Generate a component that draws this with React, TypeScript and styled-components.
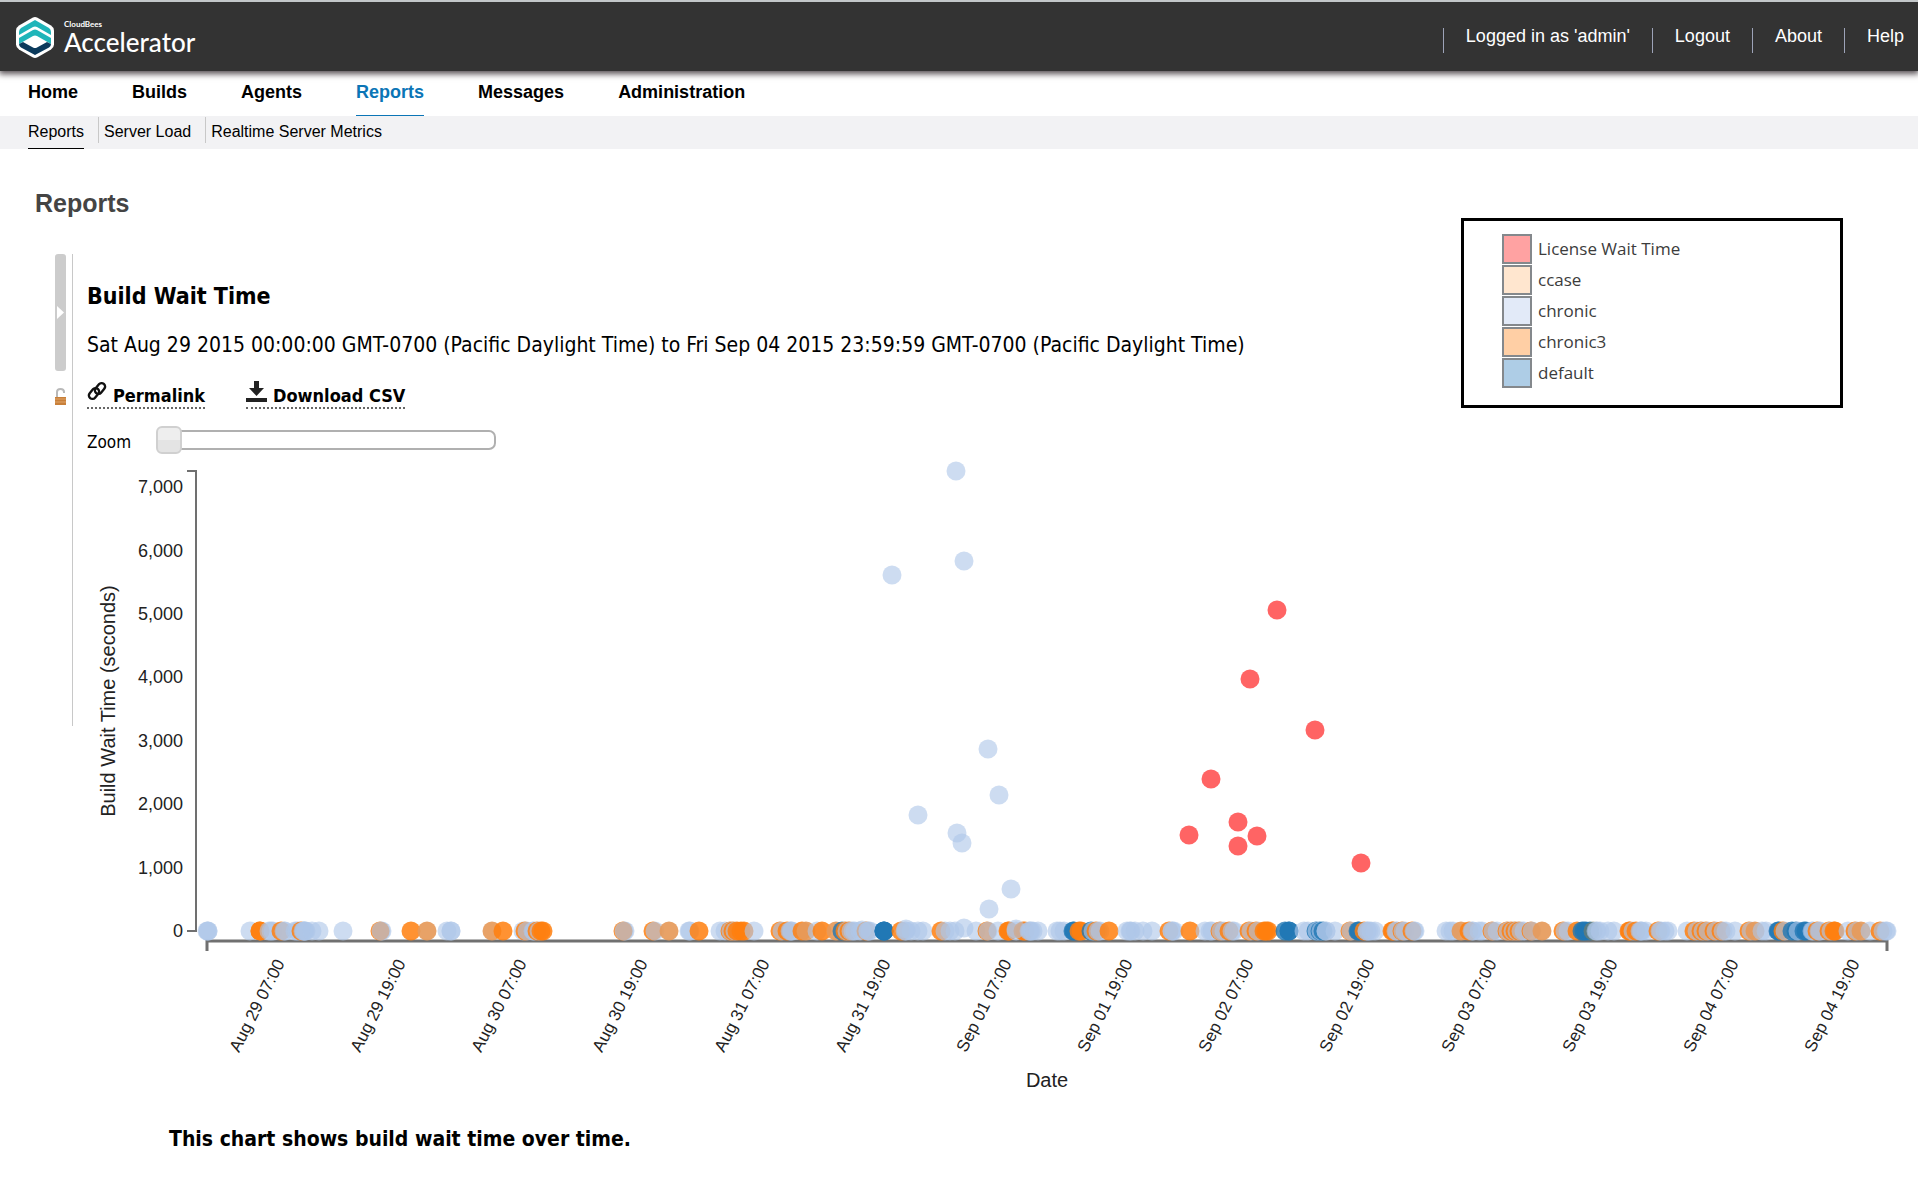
import React from 'react';
import styled, { createGlobalStyle } from 'styled-components';

const Global = createGlobalStyle`
  * { box-sizing: border-box; }
  body { margin: 0; background: #fff; color: #000; font-family: "Liberation Sans", Arial, sans-serif; }
`;

const ui = '"Liberation Sans", Arial, sans-serif';
const report = '"DejaVu Sans Condensed", "DejaVu Sans", sans-serif';

const Masthead = styled.header`
  display: flex;
  justify-content: space-between;
  align-items: flex-start;
  height: 71px;
  padding: 0 14px 0 16px;
  border-top: 2px solid #c3c7c9;
  background: #333;
  box-shadow: 0 2px 6px 1px rgba(30, 20, 25, 0.75);
`;

const Brand = styled.a`
  display: flex;
  gap: 10px;
  padding-top: 15px;
  color: #fff;
  text-decoration: none;
  font-family: Lato, "Open Sans", sans-serif;
`;

const BrandText = styled.span`
  display: flex;
  flex-direction: column;
  padding-top: 2px;
`;

const Company = styled.span`
  font-size: 8px;
  line-height: 10px;
  font-weight: bold;
`;

const Product = styled.span`
  font-size: 26px;
  line-height: 26px;
  font-weight: 500;
`;

const Account = styled.nav`
  display: flex;
  padding-top: 26px;
`;

const AccountItem = styled.span`
  height: 25px;
  margin-left: 22px;
  padding-left: 22px;
  border-left: 1px solid #9da3b8;
  font-size: 18px;
  line-height: 16px;
  color: #fff;
  a { color: inherit; text-decoration: none; }
`;

const MainNav = styled.nav`
  display: flex;
  gap: 54px;
  height: 45px;
  padding-left: 28px;
`;

const MainLink = styled.a<{ $on?: boolean }>`
  padding-top: 11px;
  font-size: 18px;
  line-height: 20px;
  font-weight: bold;
  text-decoration: none;
  color: ${(p) => (p.$on ? '#0b75b6' : '#000')};
  border-bottom: 1px solid ${(p) => (p.$on ? '#0b75b6' : 'transparent')};
`;

const SubNav = styled.nav`
  display: flex;
  height: 33px;
  padding-left: 28px;
  background: #f2f2f4;
`;

const SubItem = styled.span`
  display: flex;
  & + &::before {
    content: '';
    height: 26px;
    margin: 1px 5px 0 14px;
    border-left: 1px solid #c8c8c8;
  }
`;

const SubLink = styled.a<{ $on?: boolean }>`
  padding-top: 7px;
  font-size: 16px;
  line-height: 18px;
  text-decoration: none;
  color: #000;
  border-bottom: 1px solid ${(p) => (p.$on ? '#000' : 'transparent')};
`;

const PageTitle = styled.h1`
  margin: 40px 0 37px 35px;
  font-size: 25px;
  line-height: 28px;
  color: #444;
`;

const Panel = styled.main`
  display: flex;
  padding-left: 55px;
`;

const Rail = styled.aside`
  display: flex;
  flex-direction: column;
  gap: 17px;
  flex: none;
  width: 18px;
  height: 472px;
  border-right: 1px solid #c8c8c8;
`;

const Expander = styled.button`
  display: grid;
  place-items: center;
  width: 11px;
  height: 117px;
  padding: 0;
  border: 0;
  border-radius: 3px;
  background: #ccc;
`;

const LockIcon = styled.svg`
  display: block;
  width: 11px;
  height: 17px;
`;

const Content = styled.section`
  flex: 1;
  min-width: 0;
  padding-left: 14px;
  font-family: ${report};
`;

const Top = styled.div`
  display: flex;
  justify-content: space-between;
  align-items: flex-start;
  height: 206px;
  padding-right: 75px;
`;

const ReportTitle = styled.h2`
  margin: 28px 0 21px;
  font-size: 23px;
  line-height: 28px;
`;

const Range = styled.p`
  margin: 0 0 22px;
  font-size: 21px;
  line-height: 28px;
`;

const Actions = styled.div`
  display: flex;
  gap: 41px;
`;

const Action = styled.a`
  display: flex;
  align-items: flex-end;
  gap: 6px;
  height: 28px;
  padding-bottom: 1px;
  border-bottom: 2px dotted #666;
  color: #000;
  font-size: 18px;
  line-height: 20px;
  font-weight: bold;
  text-decoration: none;
  svg { align-self: flex-start; }
`;

const ZoomRow = styled.div`
  display: flex;
  align-items: center;
  gap: 25px;
  height: 28px;
  margin-top: 17px;
  label { padding-top: 3px; font-size: 17px; }
`;

const Slider = styled.input`
  appearance: none;
  width: 340px;
  height: 28px;
  margin: 0;
  background: transparent;
  &::-webkit-slider-runnable-track {
    height: 20px;
    border: 2px solid #b0b0b0;
    border-radius: 7px;
    background: #fff;
  }
  &::-webkit-slider-thumb {
    appearance: none;
    width: 26px;
    height: 28px;
    margin: -6px 0 0 -2px;
    border: 2px solid #d0d0d0;
    border-radius: 6px;
    background: linear-gradient(#eee 50%, #e4e4e4 50%);
  }
`;

const Legend = styled.ul`
  flex: none;
  display: flex;
  flex-direction: column;
  gap: 1px;
  width: 382px;
  height: 190px;
  margin: -36px 0 0;
  padding: 13px 0 0 38px;
  list-style: none;
  border: 3px solid #000;
  background: #fff;
  font-family: "Open Sans", "Noto Sans", sans-serif;
  font-size: 17px;
  line-height: 30px;
  color: #3c3c3c;
`;

const LegendItem = styled.li`
  display: flex;
  gap: 6px;
`;

const Swatch = styled.span<{ $fill: string }>`
  width: 30px;
  height: 30px;
  border: 2px solid #84888c;
  background: ${(p) => p.$fill};
`;

const Chart = styled.svg`
  display: block;
  width: 100%;
  height: auto;
  font-family: ${ui};
`;

const Caption = styled.p`
  margin: 25px 0 0 82px;
  font-size: 21px;
  line-height: 28px;
  font-weight: bold;
`;

const legend = [
  ['License Wait Time', '#ffa2a2'],
  ['ccase', '#ffe6cf'],
  ['chronic', '#e2eaf8'],
  ['chronic3', '#ffcfa5'],
  ['default', '#aecde6'],
];

const yTicks = ['0', '1,000', '2,000', '3,000', '4,000', '5,000', '6,000', '7,000'];
const days = ['Aug 29', 'Aug 30', 'Aug 31', 'Sep 01', 'Sep 02', 'Sep 03', 'Sep 04'];
const xTicks = days.flatMap((d) => [`${d} 07:00`, `${d} 19:00`]);

const chronicWaits = [
  [956, 471], [964, 561], [892, 575], [988, 749], [999, 795], [918, 815],
  [957, 833], [962, 843], [1011, 889], [989, 909], [964, 928], [1016, 929], [862, 930], [906, 929],
];
const licenseWaits = [
  [1189, 835], [1211, 779], [1238, 822], [1238, 846], [1257, 836],
  [1250, 679], [1277, 610], [1315, 730], [1361, 863],
];

// Builds with almost no wait, in drawing order: l = chronic, o = chronic3,
// m = chronic and chronic3 together, b = default, c = ccase.
const baseline =
  'l207 l208 l208 l250 o260 o260 l269 l271 l273 o281 l284 l285 l295 l297 l299 o301 l303 l304 l304 l305 l306 l312 l319 l343 ' +
  'l382 o380 l381 o411 m427 l447 l451 l451 m492 o503 l523 o525 l527 l533 l534 o537 l539 o541 o543 ' +
  'l625 o623 l624 o653 l655 m669 l689 l690 o699 l720 l725 o730 l731 o733 l735 o737 o741 o744 l754 ' +
  'o780 l782 o787 l790 l791 l792 o802 m806 l817 o822 m836 b842 o845 l847 o849 l851 l853 l855 l860 o866 l868 l868 l870 b884 b884 b884 ' +
  'o901 l905 l906 l911 l918 l923 o941 l945 l950 l955 l976 o987 l988 l998 o1008 o1009 l1016 o1023 o1025 l1029 l1030 l1031 l1033 l1038 ' +
  'l1057 l1060 l1064 b1073 b1074 o1079 o1081 b1091 l1093 o1096 l1098 l1100 o1109 l1127 l1130 l1131 l1135 l1143 l1152 ' +
  'o1169 l1172 l1172 l1174 o1190 l1205 l1210 l1212 o1220 l1221 l1224 o1229 l1232 l1234 o1249 l1251 o1256 l1258 o1264 o1266 o1268 ' +
  'b1285 b1289 b1289 l1304 l1308 b1316 l1317 b1320 l1321 b1323 l1326 l1326 l1335 o1350 l1351 b1358 b1359 o1364 l1367 l1367 l1369 l1371 l1375 ' +
  'o1392 o1393 l1396 l1397 o1402 l1403 l1405 o1412 l1414 l1415 ' +
  'l1446 l1450 l1453 m1461 o1469 l1472 l1473 l1479 l1482 o1492 l1493 l1497 o1507 l1508 o1511 l1513 o1515 l1517 o1519 l1521 l1524 o1531 l1532 m1542 ' +
  'o1563 l1565 l1568 o1577 b1582 b1584 b1586 b1590 c1593 l1596 l1597 l1600 l1608 l1614 o1629 o1630 l1633 o1636 l1640 l1641 l1642 l1646 o1658 l1660 l1661 l1665 l1668 ' +
  'l1687 o1694 l1697 o1701 l1703 o1706 l1708 o1714 l1716 o1721 l1723 l1726 l1735 o1749 l1751 m1755 l1762 l1766 ' +
  'b1778 b1779 o1783 l1785 b1792 b1796 l1798 b1804 b1806 l1812 l1813 o1817 l1819 l1820 o1829 l1831 o1834 o1835 l1848 o1855 l1857 m1861 l1870 o1880 l1883 l1886 l1887';

const colors: Record<string, string> = { l: '#aec7e8', o: '#ff7f0e', m: '#e69a5a', b: '#1f77b4', c: '#7f7f5f' };
const opacities: Record<string, number> = { l: 0.62, o: 0.85, m: 0.92, b: 0.8, c: 0.6 };

function WaitChart() {
  return (
    <Chart viewBox="87 460 1831 640" role="img" aria-label="Build wait time by date">
      <g fill="none" stroke="#707070" strokeWidth="2">
        <path d="M187 471H196V931H187" />
        <path strokeWidth="3" d="M207 951V941H1887V951" />
      </g>
      {baseline.split(' ').map((p, i) => (
        <circle key={i} cx={p.slice(1)} cy="931" r="9.5" fill={colors[p[0]]} fillOpacity={opacities[p[0]]} />
      ))}
      {chronicWaits.map(([x, y]) => (
        <circle key={`${x}-${y}`} cx={x} cy={y} r="9.5" fill="#aec7e8" fillOpacity="0.62" />
      ))}
      {licenseWaits.map(([x, y]) => (
        <circle key={`${x}-${y}`} cx={x} cy={y} r="9.5" fill="#ff6464" />
      ))}
      <g fontSize="18" textAnchor="end" fill="#222">
        {yTicks.map((t, i) => (
          <text key={t} x="183" y={Math.round(937 - i * 63.4)}>{t}</text>
        ))}
      </g>
      <g fontSize="17" textAnchor="end" fill="#222">
        {xTicks.map((t, i) => (
          <text key={t} transform={`translate(${Math.round(285 + i * 121.15)} 963) rotate(-63)`}>{t}</text>
        ))}
      </g>
      <g fontSize="20" textAnchor="middle" fill="#222">
        <text transform="translate(115 701) rotate(-90)">Build Wait Time (seconds)</text>
        <text x="1047" y="1087">Date</text>
      </g>
    </Chart>
  );
}

export default function App() {
  return (
    <>
      <Global />
      <Masthead>
        <Brand href="#home">
          <svg width="38" height="41" viewBox="0 0 38 41" aria-hidden="true">
            <path fill="#fff" d="M16.500 0.700 Q19 -0.500 21.500 0.700 L35 8.500 Q38 10.500 38 13.500 V27.500 Q38 30.500 35 32.500 L21.500 40.300 Q19 41.500 16.500 40.300 L3 32.500 Q0 30.500 0 27.500 V13.500 Q0 10.500 3 8.500Z" />
            <path fill="#1fb5b9" d="M19 3 L33 11 Q35 12.500 35 15 V18 L21 10 Q19 9 17 10 L3 18 V15 Q3 12.500 5 11Z" />
            <path fill="#1fb5b9" d="M17 13 Q19 12 21 13 L35 21 V27 L21 19 Q19 18 17 19 L3 27 V21Z" />
            <path fill="#0b3a5c" d="M3 27 L7 25 L17 30.500 Q19 31.500 21 30.500 L31 25 L35 27 Q35 29 33 30.500 L19 38 L5 30.500 Q3 29 3 27Z" />
          </svg>
          <BrandText>
            <Company>CloudBees</Company>
            <Product>Accelerator</Product>
          </BrandText>
        </Brand>
        <Account aria-label="Account">
          <AccountItem>Logged in as 'admin'</AccountItem>
          {['Logout', 'About', 'Help'].map((t) => (
            <AccountItem key={t}><a href={`#${t.toLowerCase()}`}>{t}</a></AccountItem>
          ))}
        </Account>
      </Masthead>
      <MainNav aria-label="Main">
        {['Home', 'Builds', 'Agents', 'Reports', 'Messages', 'Administration'].map((t) => (
          <MainLink key={t} href={`#${t.toLowerCase()}`} $on={t === 'Reports'}>{t}</MainLink>
        ))}
      </MainNav>
      <SubNav aria-label="Reports">
        {['Reports', 'Server Load', 'Realtime Server Metrics'].map((t, i) => (
          <SubItem key={t}><SubLink href="#reports" $on={i === 0}>{t}</SubLink></SubItem>
        ))}
      </SubNav>
      <PageTitle>Reports</PageTitle>
      <Panel>
        <Rail>
          <Expander aria-label="Expand sidebar">
            <svg width="7" height="13" viewBox="0 0 7 13"><path fill="#fff" d="M0 0L7 6.5L0 13Z" /></svg>
          </Expander>
          <LockIcon viewBox="0 0 11 17" aria-hidden="true">
            <path d="M2 9V4Q2 1 5.500 1Q9 1 9 4V5" fill="none" stroke="#b9b9b9" strokeWidth="2" />
            <rect y="9" width="11" height="8" fill="#c8803a" />
            <path d="M0 11H11M0 14H11" stroke="#e0a469" />
          </LockIcon>
        </Rail>
        <Content>
          <Top>
            <div>
              <ReportTitle>Build Wait Time</ReportTitle>
              <Range>
                Sat Aug 29 2015 00:00:00 GMT-0700 (Pacific Daylight Time) to Fri Sep 04 2015 23:59:59 GMT-0700 (Pacific Daylight Time)
              </Range>
              <Actions>
                <Action href="#permalink">
                  <svg width="20" height="20" viewBox="0 0 20 20" fill="none" stroke="#111" strokeWidth="2.400" aria-hidden="true">
                    <rect x="7" y="4" width="12" height="7" rx="3.500" transform="rotate(-50 13 7.500)" />
                    <rect x="1" y="9" width="12" height="7" rx="3.500" transform="rotate(-50 7 12.500)" />
                  </svg>
                  Permalink
                </Action>
                <Action href="#csv">
                  <svg width="21" height="22" viewBox="0 0 21 22" fill="#222" aria-hidden="true">
                    <path d="M8 0H13V7H18L10.500 15L3 7H8ZM0 17H21V21H0Z" />
                  </svg>
                  Download CSV
                </Action>
              </Actions>
              <ZoomRow>
                <label htmlFor="zoom">Zoom</label>
                <Slider id="zoom" type="range" min="0" max="100" defaultValue="0" />
              </ZoomRow>
            </div>
            <Legend>
              {legend.map(([name, fill]) => (
                <LegendItem key={name}><Swatch $fill={fill} />{name}</LegendItem>
              ))}
            </Legend>
          </Top>
          <WaitChart />
          <Caption>This chart shows build wait time over time.</Caption>
        </Content>
      </Panel>
    </>
  );
}
